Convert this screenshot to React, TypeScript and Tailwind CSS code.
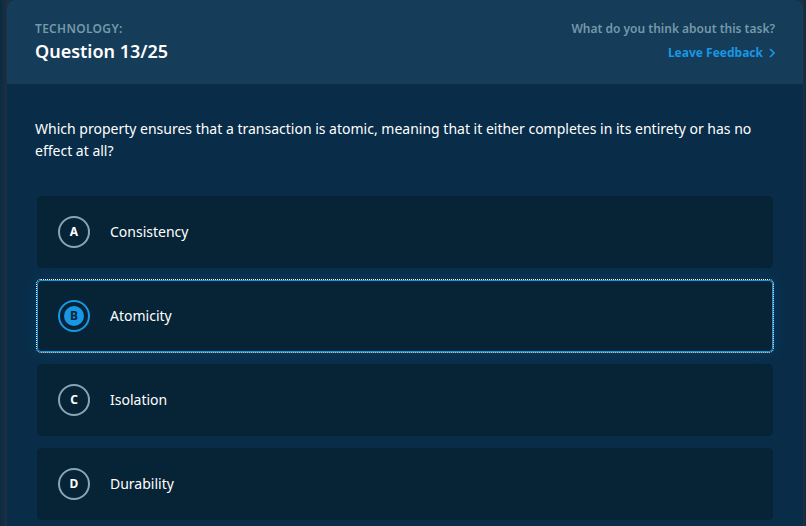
import { useState } from "react";

const options = [
  { letter: "A", text: "Consistency" },
  { letter: "B", text: "Atomicity" },
  { letter: "C", text: "Isolation" },
  { letter: "D", text: "Durability" },
];

type OptionProps = {
  letter: string;
  text: string;
  checked: boolean;
  onSelect: () => void;
};

function Option({ letter, text, checked, onSelect }: OptionProps) {
  return (
    <label
      className={`flex h-[72px] cursor-pointer items-center gap-5 rounded border px-5 ${
        checked
          ? "border-[#1797e5] bg-[#072437] shadow-[0_0_16px_rgba(23,151,229,0.15)] outline-1 outline-dotted outline-white"
          : "border-[#072437] bg-[#072437]"
      }`}
    >
      <span className="grid size-8 place-items-center">
        <input
          type="radio"
          name="answer"
          value={letter}
          checked={checked}
          onChange={onSelect}
          className="col-start-1 row-start-1 size-8 appearance-none rounded-full border-2 border-[#86a5b5] bg-clip-content p-1 outline-none checked:border-[#1797e5] checked:bg-[#1797e5]"
        />
        <span
          className={`col-start-1 row-start-1 text-xs font-bold ${
            checked ? "text-[#072437]" : "text-white"
          }`}
        >
          {letter}
        </span>
      </span>
      <span className="text-sm">{text}</span>
    </label>
  );
}

export default function App() {
  const [answer, setAnswer] = useState("B");
  return (
    <div className="h-screen overflow-hidden bg-[linear-gradient(90deg,#0b2a42,#1c3040_7px,#1c3040_calc(100%-3px),#15293a)] pr-[3px] pl-[7px] font-['Noto_Sans',sans-serif] text-white">
      <main className="min-h-full rounded-t-lg bg-[#092d49]">
        <header className="flex h-[84px] justify-between rounded-t-lg bg-[#153c58] px-7 pt-[21px]">
          <div>
            <p className="text-xs leading-4 font-semibold tracking-wide text-[#7499aa]">TECHNOLOGY:</p>
            <h1 className="text-lg leading-7 font-semibold">Question 13/25</h1>
          </div>
          <div className="text-right">
            <p className="text-xs leading-4 font-semibold text-[#7499aa]">What do you think about this task?</p>
            <a href="#feedback" className="mt-2 inline-flex items-center gap-1.5 text-xs leading-4 font-bold text-[#1797e5]">
              Leave Feedback
              <svg width="6" height="10" viewBox="0 0 6 10" fill="none" stroke="currentColor" strokeWidth="1.6" aria-hidden="true">
                <path d="M1 1l4 4-4 4" />
              </svg>
            </a>
          </div>
        </header>
        <form className="px-[30px] pt-[34px]">
          <p className="-mx-0.5 text-sm leading-[22px]">
            Which property ensures that a transaction is atomic, meaning that it either completes in its entirety or has no effect at all?
          </p>
          <div className="mt-[34px] grid gap-3">
            {options.map((o) => (
              <Option key={o.letter} {...o} checked={answer === o.letter} onSelect={() => setAnswer(o.letter)} />
            ))}
          </div>
        </form>
      </main>
    </div>
  );
}
